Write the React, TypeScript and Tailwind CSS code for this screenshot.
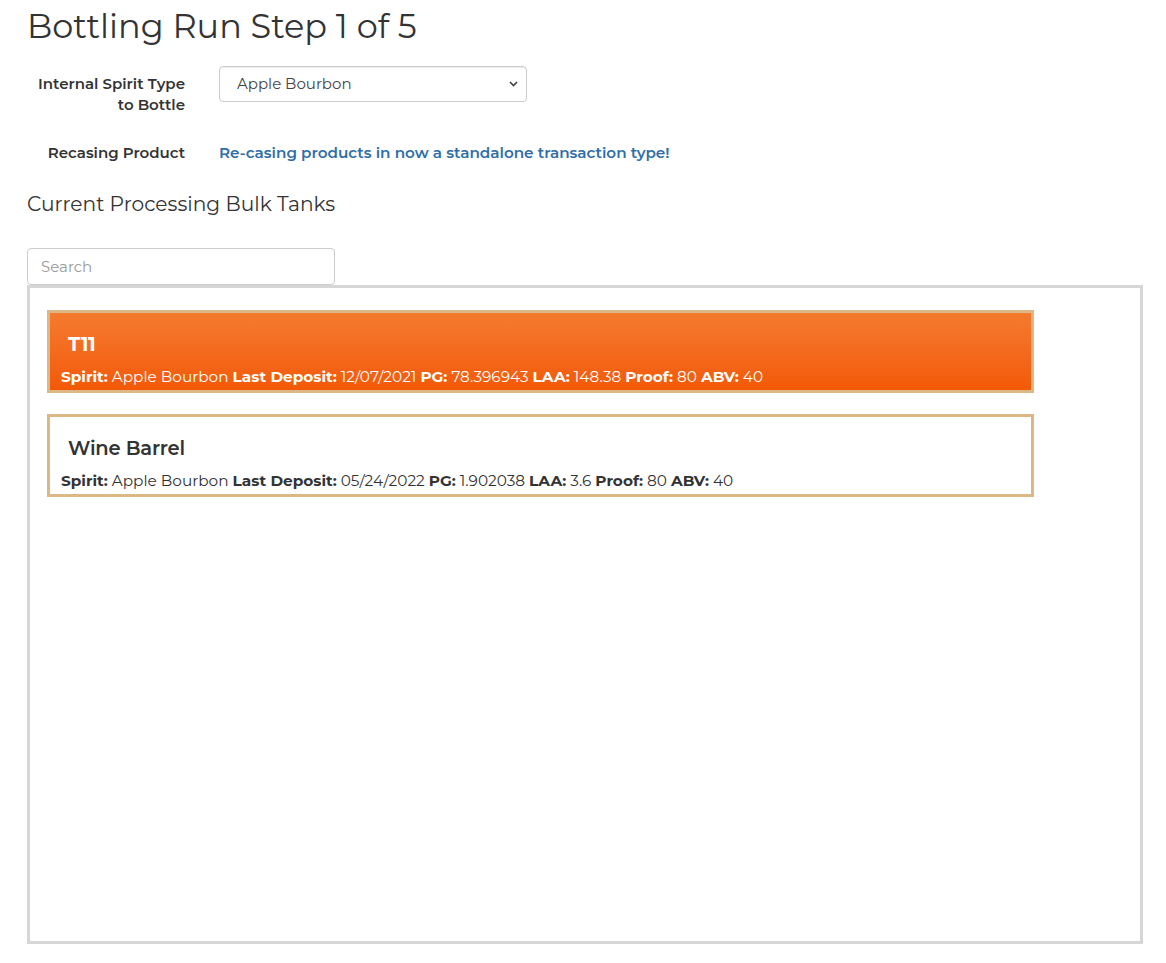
const tanks = [
  { name: 'T11', spirit: 'Apple Bourbon', lastDeposit: '12/07/2021', pg: '78.396943', laa: '148.38', proof: '80', abv: '40', selected: true },
  { name: 'Wine Barrel', spirit: 'Apple Bourbon', lastDeposit: '05/24/2022', pg: '1.902038', laa: '3.6', proof: '80', abv: '40', selected: false },
]

function TankCard({ tank }: { tank: (typeof tanks)[number] }) {
  const base = 'w-[987px] border-[3px] border-[#dbb884] px-[11px] pt-[17px] pb-[2px] cursor-pointer'
  const tone = tank.selected
    ? 'bg-gradient-to-b from-[#f47a2e] to-[#f35904] text-white'
    : 'bg-white text-[#333]'
  return (
    <div className={`${base} ${tone}`}>
      <h4 className={`ml-[7px] text-[19.5px] leading-[28px] tracking-[-0.2px] ${tank.selected ? 'font-bold' : 'font-semibold'}`}>
        {tank.name}
      </h4>
      <p className="mt-[8px] text-[15.3px] leading-[22px]">
        <b className="font-bold">Spirit:</b> {tank.spirit} <b className="font-bold">Last Deposit:</b> {tank.lastDeposit}{' '}
        <b className="font-bold">PG:</b> {tank.pg} <b className="font-bold">LAA:</b> {tank.laa}{' '}
        <b className="font-bold">Proof:</b> {tank.proof} <b className="font-bold">ABV:</b> {tank.abv}
      </p>
    </div>
  )
}

export default function App() {
  return (
    <div className="min-h-screen bg-white text-[#333] px-[27px] font-['Montserrat','Open_Sans',sans-serif]">
      <h1 className="pt-[4px] text-[33.5px] leading-[44px] font-normal">Bottling Run Step 1 of 5</h1>

      <div className="mt-[18px] flex items-start">
        <label className="w-[158px] text-right text-[15px] leading-[21px] font-semibold pt-[7px]">
          Internal Spirit Type to Bottle
        </label>
        <div className="ml-[34px] relative w-[308px]">
          <select className="w-full h-[36px] appearance-none rounded-[4px] border border-[#ccc] bg-white pl-[17px] text-[15px] text-[#444] shadow-[inset_0_1px_1px_rgba(0,0,0,0.075)]">
            <option>Apple Bourbon</option>
          </select>
          <svg className="absolute right-[9px] top-[15px] pointer-events-none" width="9" height="6" viewBox="0 0 9 6">
            <path d="M1 1l3.5 3.5L8 1" fill="none" stroke="#444" strokeWidth="1.7" />
          </svg>
        </div>
      </div>

      <div className="mt-[27px] flex items-center">
        <span className="w-[158px] text-right text-[15px] leading-[21px] font-semibold">Recasing Product</span>
        <a className="ml-[34px] text-[15.2px] leading-[21px] font-semibold text-[#2f6ea6]" href="#">
          Re-casing products in now a standalone transaction type!
        </a>
      </div>

      <h3 className="mt-[28px] text-[20.2px] leading-[26px] font-normal">Current Processing Bulk Tanks</h3>

      <input
        className="mt-[31px] block w-[308px] h-[37px] rounded-[4px] border border-[#ccc] px-[13px] text-[15px] placeholder:text-[#999] outline-none"
        placeholder="Search"
      />

      <div className="w-[1116px] h-[659px] border-[3px] border-[#d6d6d6] pt-[22px] pl-[17px] flex flex-col gap-[21px]">
        {tanks.map(t => (
          <TankCard key={t.name} tank={t} />
        ))}
      </div>
    </div>
  )
}
